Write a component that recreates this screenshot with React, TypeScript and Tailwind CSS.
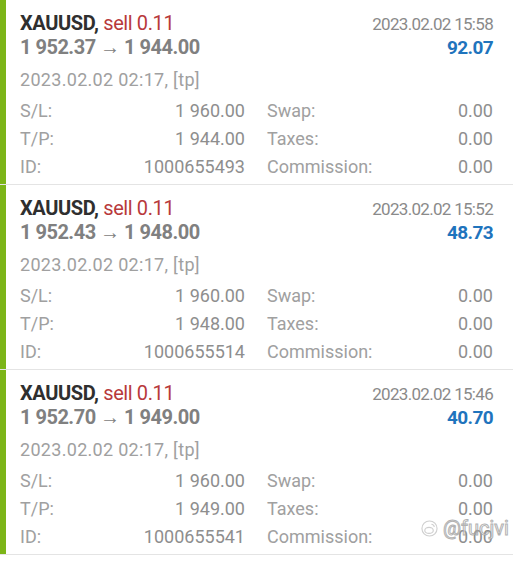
const deals = [
  { close: "2023.02.02 15:58", open: "1 952.37", price: "1 944.00", profit: "92.07", sl: "1 960.00", tp: "1 944.00", id: "1000655493" },
  { close: "2023.02.02 15:52", open: "1 952.43", price: "1 948.00", profit: "48.73", sl: "1 960.00", tp: "1 948.00", id: "1000655514" },
  { close: "2023.02.02 15:46", open: "1 952.70", price: "1 949.00", profit: "40.70", sl: "1 960.00", tp: "1 949.00", id: "1000655541" },
];

type Deal = (typeof deals)[number];

function Row({ label, value, label2 }: { label: string; value: string; label2: string }) {
  return (
    <div className="grid h-[28px] grid-cols-[225px_22px_1fr_auto] items-center text-[18px] leading-[28px]">
      <div className="flex justify-between">
        <span className="text-[#a0a0a0]">{label}</span>
        <span className="text-[#8e8e8e]">{value}</span>
      </div>
      <div />
      <span className="text-[#a0a0a0]">{label2}</span>
      <span className="text-[#8e8e8e]">0.00</span>
    </div>
  );
}

function DealCard({ d }: { d: Deal }) {
  return (
    <div className="flex h-[185px] border-b border-[#e4e4e4]">
      <div className="w-[6px] bg-[#7cb518]" />
      <div className="flex-1 pl-[14px] pr-[20px] pt-[11px]">
        <div className="flex items-start justify-between">
          <div>
            <div className="text-[20px] font-bold leading-[24px] tracking-[-0.4px]">
              <span className="text-[#2f2f2f]">XAUUSD,</span>{" "}
              <span className="font-normal text-[#b8393b]">sell 0.11</span>
            </div>
            <div className="text-[20px] font-bold leading-[24px] tracking-[-0.5px] text-[#808080]">
              {d.open} → {d.price}
            </div>
          </div>
          <div className="mt-[1px] text-right">
            <div className="text-[17px] leading-[24px] tracking-[-0.7px] text-[#8a8a8a]">{d.close}</div>
            <div className="text-[19px] font-bold leading-[24px] tracking-[-0.6px] text-[#1f74bd]">{d.profit}</div>
          </div>
        </div>
        <div className="mt-[8px] text-[18px] leading-[24px] tracking-[0.3px] text-[#a0a0a0]">
          2023.02.02 02:17, [tp]
        </div>
        <div className="mt-[5px]">
          <Row label="S/L:" value={d.sl} label2="Swap:" />
          <Row label="T/P:" value={d.tp} label2="Taxes:" />
          <Row label="ID:" value={d.id} label2="Commission:" />
        </div>
      </div>
    </div>
  );
}

export default function App() {
  return (
    <div className="relative h-[562px] w-[513px] overflow-hidden bg-white font-['Roboto',sans-serif]">
      {deals.map((d) => (
        <DealCard key={d.id} d={d} />
      ))}
      <div className="absolute left-[421px] top-[516px] flex items-center gap-[5px] opacity-80">
        <svg width="17" height="17" viewBox="0 0 18 18" fill="none" stroke="#c4c4c4" strokeWidth="1.2">
          <circle cx="9" cy="9" r="8" />
          <ellipse cx="8.5" cy="11" rx="4.5" ry="3.2" />
          <path d="M11 4.5a3 3 0 0 1 3 3" />
        </svg>
        <span className="text-[20px] leading-[24px] text-white [-webkit-text-stroke:1px_#a0a0a0]">@fucjvi</span>
      </div>
    </div>
  );
}
